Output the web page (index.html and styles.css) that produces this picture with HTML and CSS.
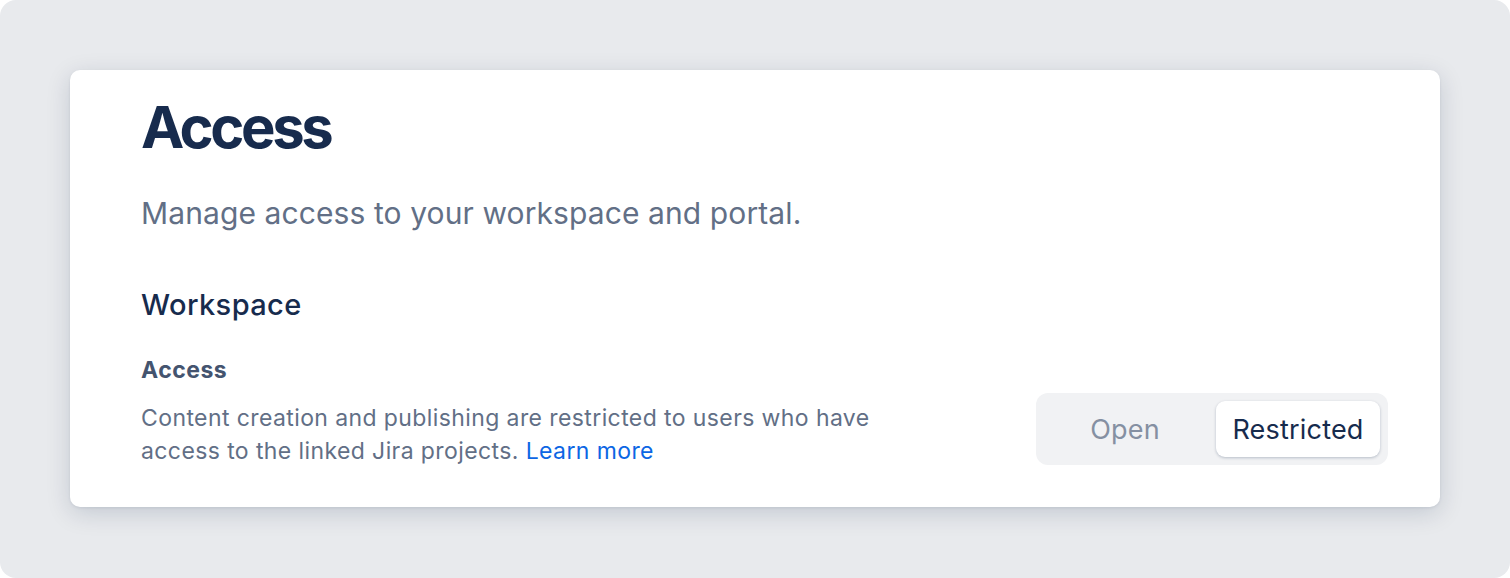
FILE: index.html
```html
<!DOCTYPE html>
<html lang="en">
<head>
    <meta charset="UTF-8">
    <meta name="viewport" content="width=device-width, initial-scale=1.0">
    <title>Access</title>
    <link rel="stylesheet" href="styles.css">
</head>
<body>

    <div class="frame">
        <div class="card">
            <h1 class="page-title">Access</h1>
            <p class="page-subtitle">Manage access to your workspace and portal.</p>

            <h2 class="section-title">Workspace</h2>

            <div class="setting-row">
                <div class="setting-text">
                    <div class="setting-label">Access</div>
                    <p class="setting-desc">
                        Content creation and publishing are restricted to users who have<br>
                        access to the linked Jira projects. <a href="#" class="link">Learn more</a>
                    </p>
                </div>

                <div class="segmented">
                    <button class="segment">Open</button>
                    <button class="segment selected">Restricted</button>
                </div>
            </div>
        </div>
    </div>

</body>
</html>
```

FILE: styles.css
```css
html, body {
    margin: 0;
    padding: 0;
    background: #ffffff;
}

body {
    font-family: 'Inter', 'Noto Sans', sans-serif;
    color: #172b4d;
}

/* Outer rounded backdrop */
.frame {
    box-sizing: border-box;
    width: 1510px;
    height: 578px;
    border-radius: 16px;
    background-color: #e8eaed;
    padding: 70px 70px 0 70px;
}

/* Card */
.card {
    background: #fff;
    border-radius: 10px;
    height: 437px;
    box-sizing: border-box;
    padding: 22px 52px 0 71px;
    box-shadow: 0 6px 24px rgba(9, 30, 66, 0.16), 0 1px 3px rgba(9, 30, 66, 0.08);
}

.page-title {
    margin: 0;
    font-size: 58px;
    line-height: 70px;
    font-weight: 700;
    letter-spacing: -3.4px;
    color: #172b4d;
}

.page-subtitle {
    margin: 33px 0 0 0;
    font-size: 30px;
    line-height: 36px;
    letter-spacing: 0.1px;
    color: #626f86;
}

.section-title {
    margin: 56px 0 0 0;
    font-size: 29px;
    line-height: 36px;
    font-weight: 500;
    letter-spacing: 0.4px;
    color: #172b4d;
}

/* Setting row */
.setting-row {
    display: flex;
    justify-content: space-between;
    align-items: flex-end;
    margin-top: 32px;
}

.setting-label {
    font-size: 23px;
    line-height: 30px;
    font-weight: 700;
    letter-spacing: 0.5px;
    color: #44546f;
}

.setting-desc {
    margin: 17px 0 0 0;
    font-size: 23px;
    line-height: 33px;
    letter-spacing: 0.4px;
    color: #626f86;
}

.link {
    color: #0c66e4;
    text-decoration: none;
}

/* Segmented control */
.segmented {
    display: flex;
    padding: 8px;
    background-color: #f1f2f4;
    border-radius: 12px;
    margin-bottom: 3px;
}

.segment {
    font-family: inherit;
    font-size: 27px;
    letter-spacing: 0.2px;
    border: none;
    background: none;
    color: #8590a2;
    border-radius: 9px;
    height: 56px;
    padding: 0;
    cursor: pointer;
}

.segment:first-child {
    width: 172px;
    padding-right: 10px;
}

.segment.selected {
    background: #fff;
    color: #172b4d;
    width: 164px;
    box-shadow: 0 1px 3px rgba(9, 30, 66, 0.25);
}
```
